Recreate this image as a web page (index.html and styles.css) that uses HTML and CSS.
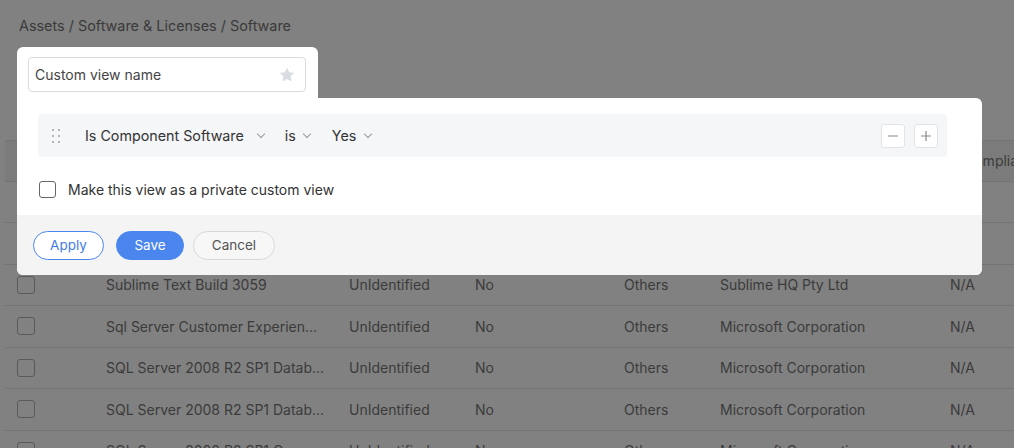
FILE: index.html
```html
<!DOCTYPE html>
<html lang="en">
<head>
  <meta charset="UTF-8">
  <meta name="viewport" content="width=device-width, initial-scale=1.0">
  <title>Software</title>
  <link rel="stylesheet" href="styles.css">
</head>
<body>
  <div class="breadcrumb">Assets / Software &amp; Licenses / Software</div>
  <div class="toolbar"></div>

  <div class="list">
    <div class="row head">
      <div class="cell"></div>
      <div class="cell">Software</div>
      <div class="cell">Category</div>
      <div class="cell">Component</div>
      <div class="cell">Type</div>
      <div class="cell">Manufacturer</div>
      <div class="cell comp">Compliance</div>
    </div>
    <div class="row">
      <div class="cell"><span class="box"></span></div>
      <div class="cell">Adobe Flash Player 32 NPAPI</div>
      <div class="cell">UnIdentified</div>
      <div class="cell">No</div>
      <div class="cell">Others</div>
      <div class="cell">Adobe Systems Incorporated</div>
      <div class="cell">N/A</div>
    </div>
    <div class="row">
      <div class="cell"><span class="box"></span></div>
      <div class="cell">Microsoft Visual C++ 2010</div>
      <div class="cell">UnIdentified</div>
      <div class="cell">No</div>
      <div class="cell">Others</div>
      <div class="cell">Microsoft Corporation</div>
      <div class="cell">N/A</div>
    </div>
    <div class="row">
      <div class="cell"><span class="box"></span></div>
      <div class="cell">Sublime Text Build 3059</div>
      <div class="cell">UnIdentified</div>
      <div class="cell">No</div>
      <div class="cell">Others</div>
      <div class="cell">Sublime HQ Pty Ltd</div>
      <div class="cell">N/A</div>
    </div>
    <div class="row">
      <div class="cell"><span class="box"></span></div>
      <div class="cell">Sql Server Customer Experien...</div>
      <div class="cell">UnIdentified</div>
      <div class="cell">No</div>
      <div class="cell">Others</div>
      <div class="cell">Microsoft Corporation</div>
      <div class="cell">N/A</div>
    </div>
    <div class="row">
      <div class="cell"><span class="box"></span></div>
      <div class="cell">SQL Server 2008 R2 SP1 Datab...</div>
      <div class="cell">UnIdentified</div>
      <div class="cell">No</div>
      <div class="cell">Others</div>
      <div class="cell">Microsoft Corporation</div>
      <div class="cell">N/A</div>
    </div>
    <div class="row">
      <div class="cell"><span class="box"></span></div>
      <div class="cell">SQL Server 2008 R2 SP1 Datab...</div>
      <div class="cell">UnIdentified</div>
      <div class="cell">No</div>
      <div class="cell">Others</div>
      <div class="cell">Microsoft Corporation</div>
      <div class="cell">N/A</div>
    </div>
    <div class="row">
      <div class="cell"><span class="box"></span></div>
      <div class="cell">SQL Server 2008 R2 SP1 Com...</div>
      <div class="cell">UnIdentified</div>
      <div class="cell">No</div>
      <div class="cell">Others</div>
      <div class="cell">Microsoft Corporation</div>
      <div class="cell">N/A</div>
    </div>
  </div>

  <!-- custom view popup -->
  <div class="popup">
    <div class="tab">
      <div class="name-input">
        <span>Custom view name</span>
        <svg class="star" width="16" height="16" viewBox="0 0 24 24">
          <path d="M12 2.5l2.9 6.1 6.6.8-4.9 4.6 1.3 6.6L12 17.3l-5.9 3.3 1.3-6.6-4.9-4.6 6.6-.8z" fill="#d9dce2" stroke="#d9dce2" stroke-width="1.5" stroke-linejoin="round"/>
        </svg>
      </div>
    </div>
    <div class="panel">
      <div class="body">
        <div class="criteria">
          <span class="drag">
            <i></i><i></i><i></i><i></i><i></i><i></i>
          </span>
          <span class="pick field">Is Component Software <span class="chev"></span></span>
          <span class="pick op">is <span class="chev"></span></span>
          <span class="pick val">Yes <span class="chev"></span></span>
          <span class="ctrls">
            <button type="button" class="sq">
              <svg width="12" height="12" viewBox="0 0 12 12"><path d="M1 6h10" stroke="#8a8a8a" stroke-width="1.2"/></svg>
            </button>
            <button type="button" class="sq">
              <svg width="12" height="12" viewBox="0 0 12 12"><path d="M1 6h10M6 1v10" stroke="#8a8a8a" stroke-width="1.2"/></svg>
            </button>
          </span>
        </div>
        <label class="private">
          <span class="check"></span>
          Make this view as a private custom view
        </label>
      </div>
      <div class="foot">
        <button type="button" class="btn apply">Apply</button>
        <button type="button" class="btn save">Save</button>
        <button type="button" class="btn cancel">Cancel</button>
      </div>
    </div>
  </div>
</body>
</html>
```

FILE: styles.css
```css
body {
  font-family: Inter, "Open Sans", sans-serif;
  background-color: #818181;
  color: #3b3b3b;
  margin: 0;
  font-size: 14px;
}
.breadcrumb {
  padding: 16px 19px 0;
  height: 20px;
  line-height: 20px;
  font-size: 14.4px;
  color: #3a3a3a;
}
.toolbar {
  height: 104px;
}
.list {
  margin-left: 5px;
}
.row {
  display: grid;
  grid-template-columns: 101px 243px 126px 149px 96px 230px 1fr;
  height: 41.5px;
  align-items: center;
  border-bottom: 1px solid #747474;
  box-sizing: border-box;
  white-space: nowrap;
}
.row.head {
  background-color: #7b7b7b;
  border-top: 1px solid #747474;
}
.cell.comp {
  padding-left: 14px;
}
.box {
  display: block;
  width: 16px;
  height: 16px;
  margin-left: 12px;
  border: 1px solid #5a5a5a;
  border-radius: 3px;
}

.popup {
  position: absolute;
  left: 17px;
  top: 47px;
  width: 965px;
}
.tab {
  width: 301px;
  height: 51px;
  box-sizing: border-box;
  padding: 10px 12px 0 11px;
  background-color: #fff;
  border-radius: 6px 6px 0 0;
}
.name-input {
  display: flex;
  align-items: center;
  justify-content: space-between;
  height: 35px;
  box-sizing: border-box;
  padding: 0 10px 0 6px;
  border: 1px solid #d9dce2;
  border-radius: 4px;
  font-size: 14px;
  color: #444;
}
.panel {
  background-color: #fff;
  border-radius: 0 6px 6px 6px;
  overflow: hidden;
}
.body {
  padding: 16px 35px 0 21px;
  height: 117px;
  box-sizing: border-box;
}
.criteria {
  display: flex;
  align-items: center;
  height: 43px;
  background-color: #f5f6f8;
  border-radius: 4px;
  padding: 0 9px 0 14px;
  font-size: 14.3px;
  color: #333;
}
.drag {
  display: grid;
  grid-template-columns: 2px 2px;
  gap: 4px;
  margin-right: 25px;
}
.drag i {
  width: 2px;
  height: 2px;
  background-color: #a0a0a0;
  border-radius: 1px;
}
.pick {
  display: flex;
  align-items: center;
}
.field {
  margin-right: 21px;
}
.op {
  margin-right: 22px;
}
.chev {
  width: 5px;
  height: 5px;
  border-right: 1.5px solid #9a9a9a;
  border-bottom: 1.5px solid #9a9a9a;
  transform: rotate(45deg);
  margin: -4px 0 0 14px;
}
.op .chev {
  margin-left: 8px;
}
.val .chev {
  margin-left: 9px;
}
.ctrls {
  margin-left: auto;
  display: flex;
  gap: 9px;
}
.sq {
  display: flex;
  align-items: center;
  justify-content: center;
  width: 24px;
  height: 24px;
  padding: 0;
  border: 1px solid #e1e3e7;
  border-radius: 3px;
  background-color: #fff;
}
.private {
  display: flex;
  align-items: center;
  margin-top: 24px;
  color: #333;
}
.check {
  width: 15px;
  height: 15px;
  border: 1.5px solid #666;
  border-radius: 3px;
  margin: 0 12px 0 1px;
}
.foot {
  display: flex;
  align-items: center;
  height: 60px;
  padding-left: 16px;
  background-color: #f4f4f4;
}
.btn {
  height: 29px;
  border-radius: 15px;
  font-family: inherit;
  font-size: 13.5px;
  padding: 0;
  cursor: pointer;
}
.apply {
  width: 71px;
  border: 1px solid #4a86ee;
  background-color: #fff;
  color: #3f7de6;
  margin-right: 12px;
}
.save {
  width: 68px;
  border: 1px solid #4a86ee;
  background-color: #4a86ee;
  color: #fff;
  margin-right: 9px;
}
.cancel {
  width: 82px;
  border: 1px solid #d8d8d8;
  background-color: #f7f7f7;
  color: #555;
}
```
